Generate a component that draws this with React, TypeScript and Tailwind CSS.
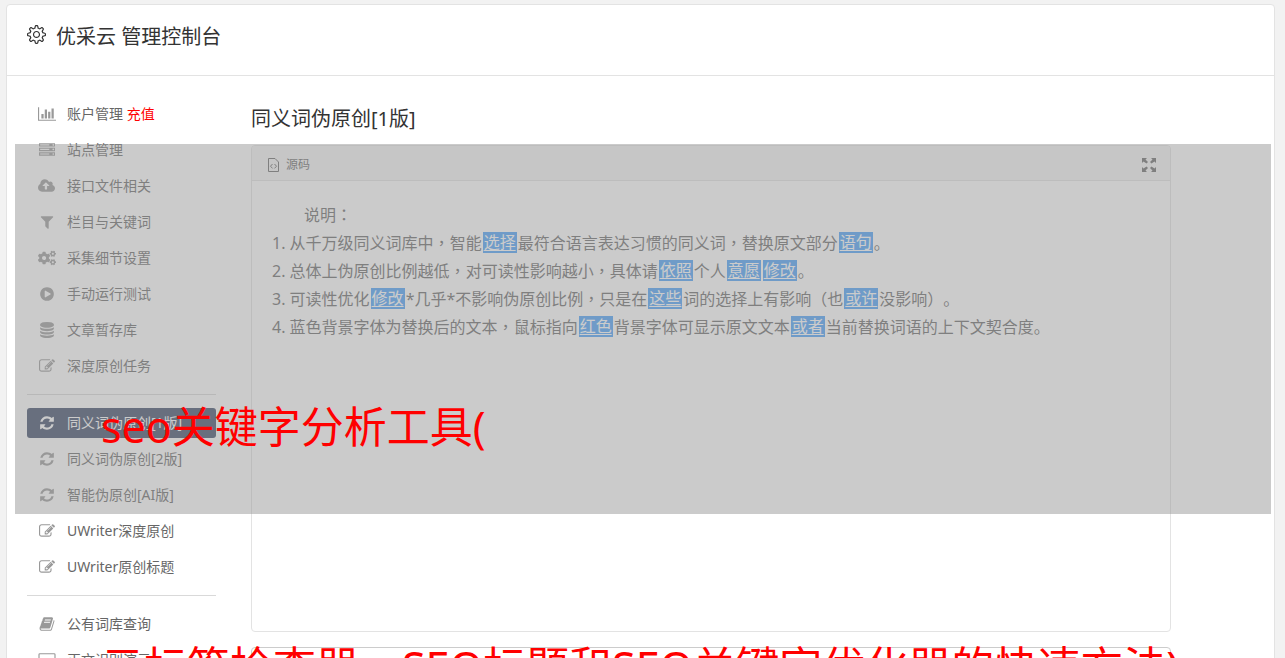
import React from 'react';
import { SlSettings } from 'react-icons/sl';
import { FaCogs } from 'react-icons/fa';
import { clsx } from 'clsx';

const glyphs = {
  chart: { box: '0 0 2048 1792', w: 'w-[18px]', d: 'M640 896v512H384V896h256zm384-512v1024H768V384h256zm1024 1152v128H0V128h128v1408h1920zM1408 640v768h-256V640h256zm384-384v1152h-256V256h256z' },
  server: { box: '0 0 1792 1792', w: 'w-4', d: 'M128 1408h1024v-128H128v128zm0-512h1024V768H128v128zm1568 448q0-40-28-68t-68-28-68 28-28 68 28 68 68 28 68-28 28-68zM128 384h1024V256H128v128zm1568 448q0-40-28-68t-68-28-68 28-28 68 28 68 68 28 68-28 28-68zm0-512q0-40-28-68t-68-28-68 28-28 68 28 68 68 28 68-28 28-68zm96 832v384H0v-384h1792zm0-512v384H0V640h1792zm0-512v384H0V128h1792z' },
  cloud: { box: '-64 0 1920 1792', w: 'w-[17px]', d: 'M1216 864q0-14-9-23l-352-352q-9-9-23-9t-23 9l-351 351q-10 12-10 24 0 14 9 23t23 9h224v352q0 13 9.5 22.5t22.5 9.5h192q13 0 22.5-9.5t9.5-22.5v-352h224q13 0 22.5-9.5t9.5-22.5zm640 288q0 159-112.500 271.500t-271.500 112.500h-1088q-185 0-316.500-131.500t-131.500-316.500q0-130 70-240t188-165q-2-30-2-43 0-212 150-362t362-150q156 0 285.500 87t188.500 231q71-62 166-62 106 0 181 75t75 181q0 76-41 138 130 31 213.500 135.500t83.500 238.500z' },
  filter: { box: '0 0 1792 1792', w: 'w-4', d: 'M1595 295q17 41-14 70l-493 493v742q0 42-39 59-13 5-25 5-27 0-45-19l-256-256q-19-19-19-45v-486l-493-493q-31-29-14-70 17-39 59-39h1280q42 0 59 39z' },
  play: { box: '0 0 1792 1792', w: 'w-4', d: 'M896 128q209 0 385.500 103t279.500 279.500 103 385.500-103 385.500-279.500 279.500-385.500 103-385.500-103-279.500-279.500-103-385.500 103-385.500 279.500-279.500 385.500-103zm384 823q32-18 32-55t-32-55l-544-320q-31-19-64-1-32 19-32 56v640q0 37 32 56 16 8 32 8 17 0 32-9z' },
  database: { box: '0 0 1792 1792', w: 'w-4', d: 'M896 768q237 0 443-43t325-127v170q0 69-103 128t-280 93.500-385 34.500-385-34.500-280-93.500-103-128v-170q119 84 325 127t443 43zm0 768q237 0 443-43t325-127v170q0 69-103 128t-280 93.500-385 34.500-385-34.500-280-93.500-103-128v-170q119 84 325 127t443 43zm0-384q237 0 443-43t325-127v170q0 69-103 128t-280 93.500-385 34.500-385-34.500-280-93.500-103-128v-170q119 84 325 127t443 43zm0-1152q208 0 385 34.500t280 93.500 103 128v128q0 69-103 128t-280 93.500-385 34.500-385-34.500-280-93.500-103-128v-128q0-69 103-128t280-93.500 385-34.500z' },
  edit: { box: '0 0 1792 1792', w: 'w-4', d: 'M888 1184l116-116-152-152-116 116v56h96v96h56zm440-720q-16-16-33 1l-350 350q-17 17-1 33t33-1l350-350q17-17 1-33zm80 594v190q0 119-84.500 203.500t-203.500 84.500h-832q-119 0-203.500-84.500t-84.500-203.500v-832q0-119 84.500-203.500t203.500-84.500h832q63 0 117 25 15 7 18 23 3 17-9 29l-49 49q-14 14-32 8-23-6-45-6h-832q-66 0-113 47t-47 113v832q0 66 47 113t113 47h832q66 0 113-47t47-113v-126q0-13 9-22l64-64q15-15 35-7t20 29zm-96-738l288 288-672 672h-288v-288zm444 132l-92 92-288-288 92-92q28-28 68-28t68 28l152 152q28 28 28 68t-28 68z' },
  refresh: { box: '0 0 1792 1792', w: 'w-4', d: 'M1639 1056q0 5-1 7-64 268-268 434.500t-478 166.500q-146 0-282.500-55t-243.500-157l-129 129q-19 19-45 19t-45-19-19-45v-448q0-26 19-45t45-19h448q26 0 45 19t19 45-19 45l-137 137q71 66 161 102t187 36q134 0 250-65t186-179q11-17 53-117 8-23 30-23h192q13 0 22.500 9.500t9.500 22.500zm25-800v448q0 26-19 45t-45 19h-448q-26 0-45-19t-19-45 19-45l138-138q-148-137-349-137-134 0-250 65t-186 179q-11 17-53 117-8 23-30 23h-199q-13 0-22.500-9.500t-9.500-22.500v-7q65-268 270-434.500t480-166.500q146 0 284 55.500t245 156.500l130-129q19-19 45-19t45 19 19 45z' },
  book: { box: '0 0 1792 1792', w: 'w-4', d: 'M1703 478q40 57 18 129l-275 906q-19 64-76.500 107.500t-122.500 43.500h-923q-77 0-148.500-53.500t-99.500-131.500q-24-67-2-127 0-4 3-27t4-37q1-8-3-21.500t-3-19.500q2-11 8-21t16.500-23.500 16.500-23.500q23-38 45-91.500t30-91.500q3-10 .5-30t-.5-28q3-11 17-28t17-23q21-36 42-92t25-90q1-9-2.500-32t.5-28q4-13 22-30.500t22-22.500q19-26 42.500-84.500t27.500-96.500q1-8-3-25.500t-2-26.500q2-8 9-18t18-23 17-21q8-12 16.500-30.500t15-35 16-36 19.500-32 26.500-23.500 36-11.500 47.500 5.500l-1 3q38-9 51-9h761q74 0 114 56t18 130l-274 906q-36 119-71.500 153.500t-128.500 34.500h-869q-27 0-38 15-11 16-1 43 24 70 144 70h923q29 0 56-15.500t35-41.500l300-987q7-22 5-57 38 15 59 43zm-1064 2q-4 13 2 22.500t20 9.500h608q13 0 25.500-9.500t16.500-22.500l21-64q4-13-2-22.500t-20-9.500h-608q-13 0-25.500 9.500t-16.500 22.500zm-83 256q-4 13 2 22.500t20 9.500h608q13 0 25.500-9.500t16.500-22.500l21-64q4-13-2-22.500t-20-9.500h-608q-13 0-25.500 9.500t-16.500 22.500z' },
  desktop: { box: '0 0 1920 1792', w: 'w-[18px]', d: 'M1792 1120V288q0-32-32-32H160q-32 0-32 32v832q0 32 32 32h1600q32 0 32-32zm128-832v1088q0 160-160 160h-544q0 37 16 77t32 71 16 43q0 51-64 51H704q-64 0-64-51 0-12 16-43t32-71 16-77H160q-160 0-160-160V288q0-160 160-160h1600q160 0 160 160z' },
};

type GlyphName = keyof typeof glyphs;

const Glyph = ({ name }: { name: GlyphName | 'cogs' }) => {
  if (name === 'cogs') return <FaCogs className="w-[18px] h-[18px]" />;
  const { box, w, d } = glyphs[name];
  return (
    <svg viewBox={box} className={clsx(w, 'h-4')} fill="currentColor" fillRule="evenodd" aria-hidden="true">
      <path d={d} />
    </svg>
  );
};

interface NavItem {
  icon: GlyphName | 'cogs';
  label: string;
  extra?: string;
  active?: boolean;
}

const groups: NavItem[][] = [
  [
    { icon: 'chart', label: '账户管理', extra: '充值' },
    { icon: 'server', label: '站点管理' },
    { icon: 'cloud', label: '接口文件相关' },
    { icon: 'filter', label: '栏目与关键词' },
    { icon: 'cogs', label: '采集细节设置' },
    { icon: 'play', label: '手动运行测试' },
    { icon: 'database', label: '文章暂存库' },
    { icon: 'edit', label: '深度原创任务' },
  ],
  [
    { icon: 'refresh', label: '同义词伪原创[1版]', active: true },
    { icon: 'refresh', label: '同义词伪原创[2版]' },
    { icon: 'refresh', label: '智能伪原创[AI版]' },
    { icon: 'edit', label: 'UWriter深度原创' },
    { icon: 'edit', label: 'UWriter原创标题' },
  ],
  [
    { icon: 'book', label: '公有词库查询' },
    { icon: 'desktop', label: '正文识别演示' },
  ],
];

const Sidebar = () => (
  <nav className="w-[189px] shrink-0">
    {groups.map((items, i) => (
      <ul
        key={i}
        className={clsx('flex flex-col gap-1.5', i > 0 && 'mt-[13px] border-t border-[#d9d9d9] pt-[13px]')}
      >
        {items.map(({ icon, label, extra, active }) => (
          <li key={label}>
            <a
              href="#"
              className={clsx(
                'flex h-[30px] items-center gap-[11px] whitespace-nowrap rounded-[3px] pl-2.5 text-sm',
                active ? 'bg-[#384764] text-white' : 'text-[#666]'
              )}
            >
              <span className={clsx('flex w-[19px] shrink-0 justify-center', !active && 'text-[#999]')}>
                <Glyph name={icon} />
              </span>
              <span>
                {label}
                {extra && <span className="text-[#f00]"> {extra}</span>}
              </span>
            </a>
          </li>
        ))}
      </ul>
    ))}
  </nav>
);

const Mark = ({ children }: { children: React.ReactNode }) => (
  <span className="mx-px inline-block h-[21px] bg-[#479ff9] px-px align-top mt-[3px] leading-[21px] text-white underline underline-offset-2">
    {children}
  </span>
);

// commas and colons sit in the middle of their cell
const Mid = ({ children }: { children: React.ReactNode }) => (
  <span className="font-['Noto_Sans_CJK_TC',sans-serif] leading-none">{children}</span>
);

const Editor = () => (
  <div className="overflow-hidden rounded border border-[#e3e3e3]">
    <div className="flex h-[35px] items-center justify-between border-b border-[#e3e3e3] bg-[#f5f5f5] pl-4 pr-3.5 pt-1 text-[#666]">
      <button type="button" className="flex items-center gap-[7px] text-xs">
        <svg viewBox="0 0 11 14" className="w-[11px] h-3.5" fill="none" stroke="currentColor" aria-hidden="true">
          <path d="M.5.5h6.500l3.500 3.500v9.500H.5z" />
          <path d="M4.500 6 2.500 8.200l2 2.200M6.500 6l2 2.200-2 2.200" />
        </svg>
        源码
      </button>
      <button type="button" aria-label="全屏">
        <svg viewBox="0 0 14 14" className="w-3.5 h-3.5" fill="currentColor" aria-hidden="true">
          <path d="M0 0h5L3.500 1.500 6 4 4.500 5.500 1.500 3.500 0 5zM14 0v5l-1.500-1.500L9.500 5.500 8 4l2.500-2.500L9 0zM0 14V9l1.500 1.500L4.500 8.500 6 10l-2.500 2.500L5 14zM14 14H9l1.500-1.500L8 10l1.500-1.500 3 2L14 9z" />
        </svg>
      </button>
    </div>
    <div className="min-h-[450px] p-5 text-base leading-7 text-[#666]">
      <p className="indent-[2em]">说明<Mid>：</Mid></p>
      <p>1. 从千万级同义词库中<Mid>，</Mid>智能<Mark>选择</Mark>最符合语言表达习惯的同义词<Mid>，</Mid>替换原文部分<Mark>语句</Mark>。</p>
      <p>2. 总体上伪原创比例越低<Mid>，</Mid>对可读性影响越小<Mid>，</Mid>具体请<Mark>依照</Mark>个人<Mark>意愿</Mark><Mark>修改</Mark>。</p>
      <p>3. 可读性优化<Mark>修改</Mark>*几乎*不影响伪原创比例<Mid>，</Mid>只是在<Mark>这些</Mark>词的选择上有影响（也<Mark>或许</Mark>没影响）。</p>
      <p>4. 蓝色背景字体为替换后的文本<Mid>，</Mid>鼠标指向<Mark>红色</Mark>背景字体可显示原文文本<Mark>或者</Mark>当前替换词语的上下文契合度。</p>
    </div>
  </div>
);

export default function App() {
  return (
    <div className="relative h-screen overflow-hidden bg-[#f2f2f2] pl-1.5 pr-2.5 pt-1 font-['Noto_Sans','Noto_Sans_CJK_SC',sans-serif] [text-spacing-trim:space-all]">
      <div className="min-h-screen rounded border border-[#e3e3e3] bg-white">
        <header className="flex h-[71px] items-start gap-2.5 border-b border-[#e3e3e3] pl-5 pt-4 text-[#333]">
          <SlSettings className="mt-1 w-[19px] h-[19px]" />
          <h1 className="text-xl leading-8">优采云 管理控制台</h1>
        </header>
        <div className="flex gap-[35px] pl-5 pt-[23px]">
          <Sidebar />
          <main className="min-w-0 flex-1 pr-[103px]">
            <h2 className="mb-2.5 pt-1 text-xl leading-8 text-[#333]">同义词伪原创[1版]</h2>
            <Editor />
            <textarea aria-label="原文" className="mt-[15px] block h-40 w-full resize-none rounded border border-[#ccc]" />
          </main>
        </div>
      </div>

      {/* caption banner lies over the console */}
      <div className="pointer-events-none absolute left-[15px] right-3.5 top-36 h-[370px] bg-[#979797]/50" />
      <p className="pointer-events-none absolute left-[101px] top-[307px] whitespace-nowrap text-[43px] leading-[240px] text-[#f00]">
        seo关键字分析工具(
        <br />
        元标签检查器<Mid>，</Mid>SEO标题和SEO关键字优化器的快速方法)
      </p>
    </div>
  );
}
